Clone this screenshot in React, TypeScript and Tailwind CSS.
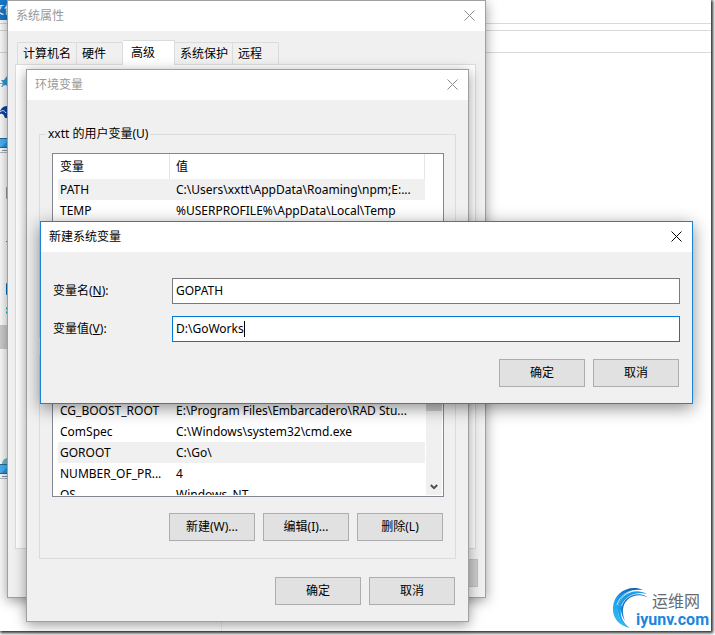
import type { ReactNode } from 'react';

interface Variable {
  name: string;
  value: string;
  selected?: boolean;
}

const USER_VARIABLES: Variable[] = [
  { name: 'PATH', value: 'C:\\Users\\xxtt\\AppData\\Roaming\\npm;E:...', selected: true },
  { name: 'TEMP', value: '%USERPROFILE%\\AppData\\Local\\Temp' },
];

const SYSTEM_VARIABLES: Variable[] = [
  { name: 'CG_BOOST_ROOT', value: 'E:\\Program Files\\Embarcadero\\RAD Stu...' },
  { name: 'ComSpec', value: 'C:\\Windows\\system32\\cmd.exe' },
  { name: 'GOROOT', value: 'C:\\Go\\', selected: true },
  { name: 'NUMBER_OF_PR...', value: '4' },
  { name: 'OS', value: 'Windows_NT' },
];

const TABS = [
  { label: '计算机名', width: 'w-[60px]' },
  { label: '硬件', width: 'w-[46px]' },
  { label: '高级', width: 'w-[52px]', selected: true },
  { label: '系统保护', width: 'w-[58px]' },
  { label: '远程', width: 'w-[46px]' },
];

function TitleBar({ title, active = false }: { title: string; active?: boolean }) {
  return (
    <header className="flex h-[30px] items-center justify-between bg-white pl-2 pr-2.5">
      <h2 className={active ? 'text-black' : 'text-[#999999]'}>{title}</h2>
      <button
        type="button"
        aria-label={`关闭 ${title}`}
        className={`pb-px ${active ? 'text-black' : 'text-[#8c8c8c]'}`}
      >
        <svg width="11" height="11" viewBox="0 0 11 11" fill="none">
          <path d="M0.5 0.5l10 10M10.5 0.5l-10 10" stroke="currentColor" strokeWidth="1" />
        </svg>
      </button>
    </header>
  );
}

function PushButton({ children }: { children: ReactNode }) {
  return (
    <button
      type="button"
      className="h-7 w-[86px] border border-[#adadad] bg-[#e1e1e1] text-center text-black"
    >
      {children}
    </button>
  );
}

function VariableList({ items, scrollable = false }: { items: Variable[]; scrollable?: boolean }) {
  return (
    <div className="flex h-[123px] items-start overflow-hidden border border-[#828790] bg-white pb-px pl-[5px] pr-px">
      <div className="h-full flex-1 overflow-hidden">
        <table className="w-full table-fixed border-separate border-spacing-0 text-left">
          <colgroup>
            <col className="w-[112px]" />
            <col />
          </colgroup>
          <thead>
            <tr className="h-[25px]">
              <th className="border-r border-[#e5e5e5] p-0 pl-0.5 font-normal">变量</th>
              <th className="border-r border-[#e5e5e5] p-0 pl-1.5 font-normal">值</th>
            </tr>
          </thead>
          <tbody>
            {items.map((item) => (
              <tr key={item.name} className={`h-[21px] ${item.selected ? 'bg-[#f0f0f0]' : ''}`}>
                <td className="whitespace-nowrap p-0 pl-0.5">{item.name}</td>
                <td className="whitespace-nowrap p-0 pl-1.5">{item.value}</td>
              </tr>
            ))}
          </tbody>
        </table>
      </div>
      {scrollable ? (
        <div className="ml-px flex h-full w-4 flex-col items-center justify-between bg-[#f0f0f0]">
          <div className="h-9 w-full bg-[#cdcdcd]" />
          <svg width="8" height="18" viewBox="0 0 8 18" fill="none">
            <path d="M0.8 8l3.2 3.2L7.2 8" stroke="#505050" strokeWidth="2" />
          </svg>
        </div>
      ) : (
        <div className="w-[17px]" />
      )}
    </div>
  );
}

interface VariableGroupProps {
  legend: string;
  items: Variable[];
  scrollable?: boolean;
}

function VariableGroup({ legend, items, scrollable }: VariableGroupProps) {
  return (
    <fieldset className="border border-[#dcdcdc] pb-[17px] pl-3 pr-[11px]">
      <legend className="-ml-1.5 px-0.5">{legend}</legend>
      <div className="pt-[11px]">
        <VariableList items={items} scrollable={scrollable} />
      </div>
      <div className="mt-4 flex justify-end gap-2 pr-px">
        <PushButton>新建(W)...</PushButton>
        <PushButton>编辑(I)...</PushButton>
        <PushButton>删除(L)</PushButton>
      </div>
    </fieldset>
  );
}

function MonitorIcon() {
  return (
    <svg width="8" height="16" viewBox="0 0 8 16">
      <rect width="8" height="9" y="1" fill="#4db2f0" />
      <path d="M0 10l8-7v7z" fill="#2b97e0" />
      <path d="M0 0.5h8M0 9.5h8" stroke="#1f6f9f" />
      <path d="M2 12.5h6" stroke="#8796a5" />
      <path d="M0 14.5h8" stroke="#b3bcc6" />
    </svg>
  );
}

function ExplorerWindow() {
  return (
    <main className="flex flex-1 flex-col bg-white shadow-[1px_1px_3px_1px_rgba(0,0,0,0.85)]">
      <div className="h-6 border-b border-[#d9d9d9]">
        <button type="button" className="-ml-2 h-5 w-[38px] bg-[#1979ca] text-left text-white">
          文件
        </button>
      </div>
      <div className="h-[7px] border-b border-[#d9d9d9]" />
      <div className="h-[22px] border-b border-[#d9d9d9]" />
      <nav className="flex w-[222px] flex-1 flex-col items-start border-r border-[#f0f0f0]">
        <svg width="8" height="13" viewBox="0 0 8 13" className="mt-[22px]">
          <path d="M1 5h3l3-4h1v11l-2-2-4 1 1-3z" fill="#2f9bdc" />
          <path d="M0 8.5h3M1 11.5h2" stroke="#6fbce8" />
        </svg>
        <svg width="8" height="12" viewBox="0 0 8 12" className="mt-[18px]">
          <path d="M0 5C2 1 4 0 8 0v12H5C4 8 2 7 0 8z" fill="#0c45a6" />
          <path d="M0 6c2-2 4-2 6 1" stroke="#ffffff" fill="none" />
        </svg>
        <div className="mt-5 flex">
          <MonitorIcon />
        </div>
        {/* edges of the folder icons under 此电脑 */}
        <svg width="8" height="160" viewBox="0 0 8 160" className="mt-2" fill="none">
          <path d="M7.5 0v15" stroke="#555555" />
          <path d="M8 25.5H6.5v11H8" stroke="#9a9a9a" />
          <path d="M6 79.5h2" stroke="#5d7da0" />
          <path d="M8 121.5H6.5v11H8" stroke="#0b6fb5" />
          <path d="M8 122h-1v10h1z" fill="#2f9bdc" />
          <path d="M6 146.5h2M6 150.5h2" stroke="#17b0d8" strokeWidth="2" />
        </svg>
        <div className="mt-[3px] h-6 w-full bg-[#d0d0d0]" />
        <svg width="8" height="100" viewBox="0 0 8 100" className="mt-2" fill="none">
          <path d="M7.5 3v6M7.5 27v6M7.5 51v6M7.5 75v6" stroke="#8a8a8a" />
        </svg>
        <svg width="8" height="7" viewBox="0 0 8 7">
          <path d="M2 7c0-4 3-6 6-6v6z" fill="#7dbcc8" />
        </svg>
        <MonitorIcon />
      </nav>
    </main>
  );
}

function SystemPropertiesWindow() {
  return (
    <section className="absolute left-[7px] top-0 w-[479px] border border-[#a0a0a0] bg-[#f0f0f0] shadow-[0_3px_12px_rgba(0,0,0,0.4)]">
      <TitleBar title="系统属性" />
      <div className="pb-2.5 pl-[7px] pr-[9px] pt-[9px]">
        <div role="tablist" className="flex items-end pl-0.5">
          {TABS.map((tab) => (
            <button
              key={tab.label}
              type="button"
              role="tab"
              aria-selected={!!tab.selected}
              className={`border-t border-r border-[#dcdcdc] text-left first:border-l ${tab.width} ${
                tab.selected
                  ? 'relative -mb-px h-[25px] bg-white pl-2'
                  : 'h-[22px] bg-[#f0f0f0] pl-[5px]'
              }`}
            >
              {tab.label}
            </button>
          ))}
        </div>
        <div className="h-[485px] border border-[#dcdcdc] bg-white" />
        <div className="mt-2.5 flex justify-end">
          <button
            type="button"
            disabled
            className="-mr-0.5 h-7 w-[86px] border border-[#bfbfbf] bg-[#cccccc] text-[#838383]"
          >
            应用(A)
          </button>
        </div>
      </div>
    </section>
  );
}

function EnvironmentWindow() {
  return (
    <section className="absolute left-[26px] top-[69px] w-[443px] border border-[#a0a0a0] bg-[#f0f0f0] shadow-[0_3px_12px_rgba(0,0,0,0.4)]">
      <TitleBar title="环境变量" />
      <div className="flex flex-col gap-[9px] px-3 pb-4 pt-[26px]">
        <VariableGroup legend="xxtt 的用户变量(U)" items={USER_VARIABLES} />
        <VariableGroup legend="系统变量(S)" items={SYSTEM_VARIABLES} scrollable />
        <div className="mt-[9px] flex justify-end gap-2 pr-px">
          <PushButton>确定</PushButton>
          <PushButton>取消</PushButton>
        </div>
      </div>
    </section>
  );
}

function NewVariableDialog() {
  return (
    <section
      role="dialog"
      aria-label="新建系统变量"
      className="absolute left-10 top-[221px] w-[653px] border border-[#1883d7] bg-[#f0f0f0] shadow-[0_4px_16px_rgba(0,0,0,0.45)]"
    >
      <TitleBar title="新建系统变量" active />
      <form className="px-3 pb-4 pt-[26px]">
        <div className="grid grid-cols-[119px_1fr] items-center gap-y-3">
          <label htmlFor="variable-name">
            变量名(<u>N</u>):
          </label>
          <div className="flex h-[26px] items-center border border-[#7a7a7a] bg-white px-[3px]">
            <input
              id="variable-name"
              type="text"
              defaultValue="GOPATH"
              className="w-full outline-none"
            />
          </div>
          <label htmlFor="variable-value">
            变量值(<u>V</u>):
          </label>
          <div className="flex h-[26px] items-center border border-[#0078d7] bg-white px-[3px]">
            <input
              id="variable-value"
              type="text"
              defaultValue="D:\GoWorks"
              className="field-sizing-content outline-none"
            />
            <span className="h-4 w-px bg-black" />
          </div>
        </div>
        <div className="mt-[17px] flex justify-end gap-2 pr-px">
          <PushButton>确定</PushButton>
          <PushButton>取消</PushButton>
        </div>
      </form>
    </section>
  );
}

function SiteLogo() {
  return (
    <div className="absolute bottom-1.5 right-1.5 flex items-end">
      <svg width="40" height="42" viewBox="0 0 40 42" className="-mr-4">
        <defs>
          <linearGradient id="swirl" x1="0.8" y1="0" x2="0.3" y2="1">
            <stop offset="0" stopColor="#0b5cab" />
            <stop offset="0.5" stopColor="#18a0ee" />
            <stop offset="1" stopColor="#35bdf6" />
          </linearGradient>
        </defs>
        <path
          d="M31 3C17-3 2 6 1 20c-1 11 6 19 17 21C9 36 5 29 6 21 7 9 18 1 31 3z"
          fill="url(#swirl)"
        />
        <path d="M35 7C23 0 8 7 6 20c-1 8 3 16 10 20C10 34 8 28 9 22 11 11 22 4 35 7z" fill="#1c9ceb" />
        <path d="M38 12C29 5 16 8 12 18c-2 5-1 11 1 16C9 28 8 22 10 17 14 6 28 3 38 12z" fill="#1478c8" />
        <path d="M33 5C20 0 8 7 5 18" stroke="#ffffff" strokeWidth="0.7" fill="none" />
        <path d="M35 8.500C24 4 13 9 9.500 19" stroke="#ffffff" strokeWidth="0.7" fill="none" />
      </svg>
      <div className="flex flex-col">
        <span className="pb-px pl-4 text-base leading-[18px] text-[#666a70]">运维网</span>
        <span className="font-[Roboto,sans-serif] text-base font-bold leading-[18px] text-[#1b86dd]">
          iyunv.com
        </span>
      </div>
    </div>
  );
}

export default function App() {
  return (
    <div className="relative flex min-h-screen overflow-hidden bg-white pb-1 pr-1 font-['Noto_Sans','Noto_Sans_CJK_SC',sans-serif] text-[12px] leading-4 text-black">
      <ExplorerWindow />
      <SystemPropertiesWindow />
      <EnvironmentWindow />
      <NewVariableDialog />
      <SiteLogo />
    </div>
  );
}
